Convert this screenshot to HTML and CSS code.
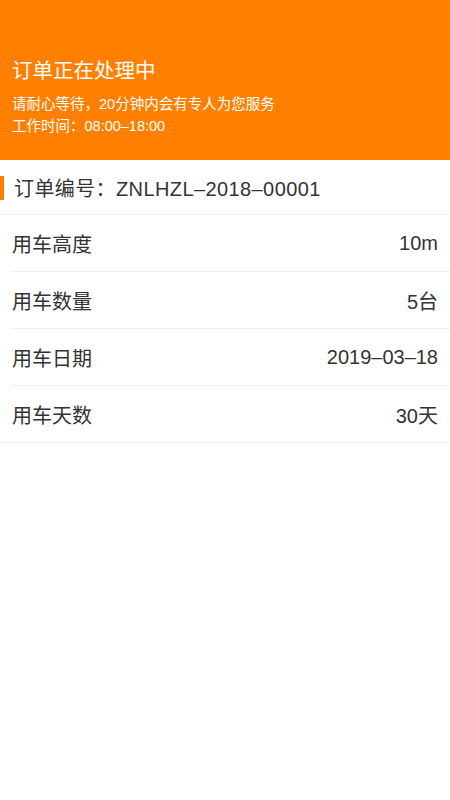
FILE: index.html
```html
<!DOCTYPE html>
<html lang="zh-CN">
<head>
<meta charset="utf-8">
<title>订单详情</title>
<link rel="stylesheet" href="styles.css">
</head>
<body>
<header class="status">
  <h1 class="status-title">订单正在处理中</h1>
  <p class="status-line">请耐心等待，20分钟内会有专人为您服务</p>
  <p class="status-line">工作时间：08:00–18:00</p>
</header>
<section class="order">
  <div class="order-no">订单编号：ZNLHZL–2018–00001</div>
  <ul class="info">
    <li class="row"><span class="label">用车高度</span><span class="value">10m</span></li>
    <li class="row"><span class="label">用车数量</span><span class="value">5台</span></li>
    <li class="row"><span class="label">用车日期</span><span class="value">2019–03–18</span></li>
    <li class="row last"><span class="label">用车天数</span><span class="value">30天</span></li>
  </ul>
</section>
</body>
</html>
```
FILE: styles.css
```css
html, body {
  margin: 0;
  padding: 0;
  background: #fff;
}
body {
  width: 450px;
  min-height: 800px;
  font-family: "Liberation Sans", "Noto Sans CJK SC", sans-serif;
  color: #333;
}
.status {
  background: #ff8000;
  color: #fff;
  height: 160px;
  box-sizing: border-box;
  padding: 57px 12px 0;
}
.status-title {
  margin: 0 0 8px;
  font-size: 20.5px;
  font-weight: normal;
  line-height: 28px;
}
.status-line {
  margin: 0;
  font-size: 14.5px;
  line-height: 22px;
}
.order-no {
  height: 54px;
  display: flex;
  align-items: center;
  padding-left: 14px;
  font-size: 20px;
  letter-spacing: 0.4px;
  position: relative;
  border-bottom: 1px solid #eee;
}
.order-no::before {
  content: "";
  position: absolute;
  left: 0;
  top: 16px;
  width: 4px;
  height: 24px;
  background: #ff8000;
}
.info {
  list-style: none;
  margin: 0;
  padding: 0 0 0 12px;
}
.row {
  height: 56px;
  display: flex;
  align-items: center;
  justify-content: space-between;
  padding-right: 12px;
  font-size: 20px;
  border-bottom: 1px solid #eee;
}
.row.last {
  margin-left: -12px;
  padding-left: 12px;
}
```
